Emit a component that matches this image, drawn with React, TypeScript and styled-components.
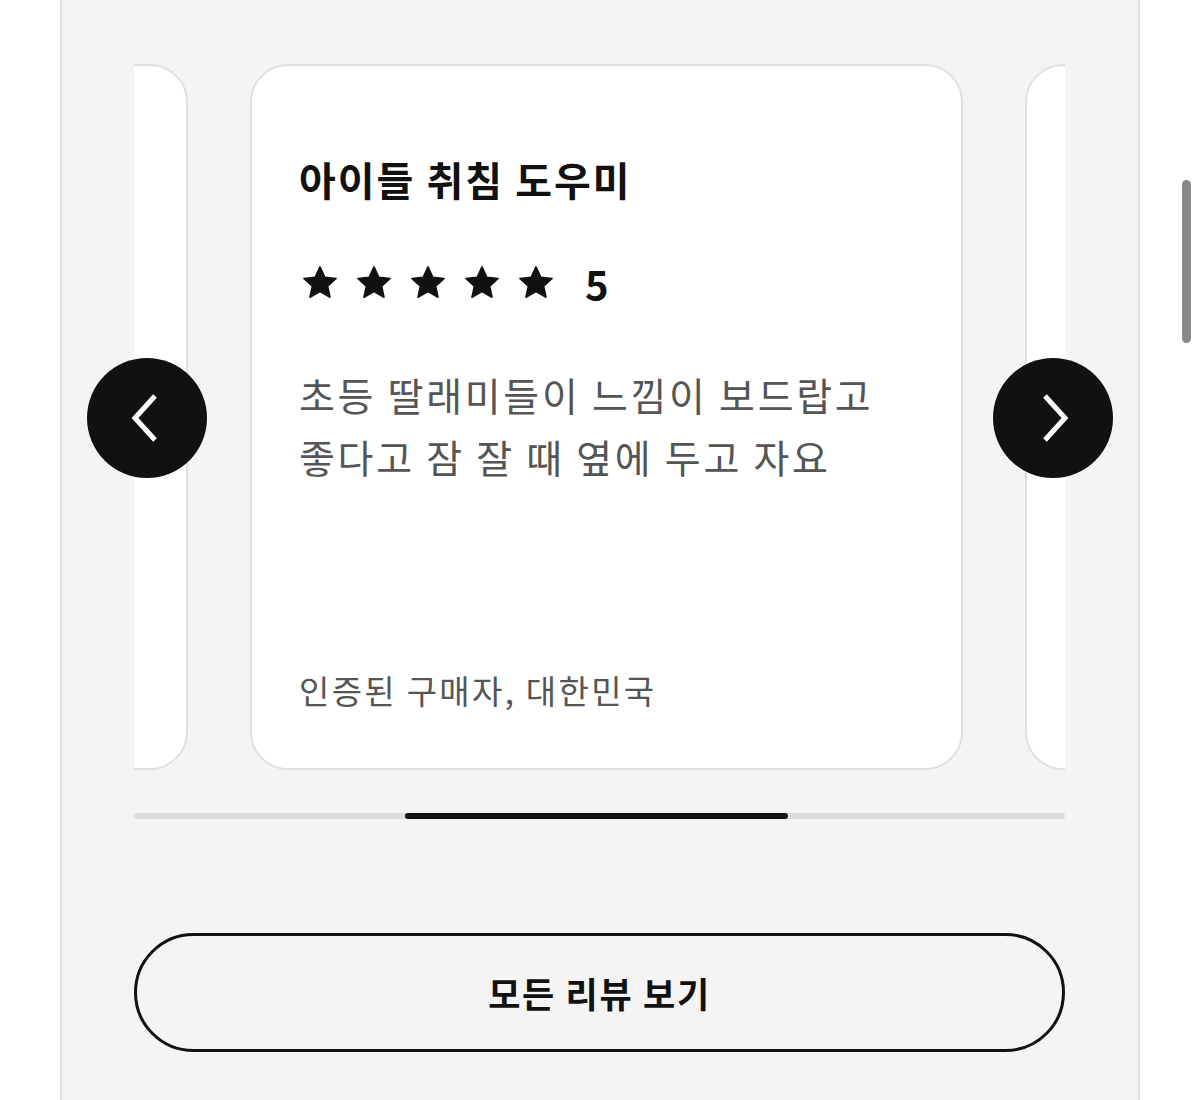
import * as React from 'react';
import styled, { createGlobalStyle } from 'styled-components';

interface Review {
    id: number;
    title: string;
    rating: number;
    body: string;
    author: string;
}

const reviews: Review[] = [
    { id: 1, title: '포근한 촉감', rating: 5, body: '아이가 정말 좋아해요', author: '인증된 구매자, 대한민국' },
    { id: 2, title: '아이들 취침 도우미', rating: 5, body: '초등 딸래미들이 느낌이 보드랍고 좋다고 잠 잘 때 옆에 두고 자요', author: '인증된 구매자, 대한민국' },
    { id: 3, title: '선물용으로 최고', rating: 5, body: '조카 선물로 샀는데 반응이 좋아요', author: '인증된 구매자, 대한민국' },
];

const CARD_WIDTH = 713;
const CARD_GAP = 62;
const activeIndex = 1;
const trackOffset = 116 - activeIndex * (CARD_WIDTH + CARD_GAP);

const Star = () => (
    <svg width="38" height="36" viewBox="0 0 24 23">
        <path
            d="M12 1.2l3.1 6.6 7.2.8-5.4 4.9 1.5 7.1L12 17l-6.4 3.6 1.5-7.1L1.7 8.6l7.2-.8z"
            fill="#111"
            stroke="#111"
            strokeWidth="1"
            strokeLinejoin="round"
        />
    </svg>
);

const Chevron = ({ dir }: { dir: 'left' | 'right' }) => (
    <svg width="40" height="52" viewBox="0 0 40 52">
        <path
            d={dir === 'left' ? 'M28 4L8 26l20 22' : 'M12 4l20 22-20 22'}
            fill="none"
            stroke="#fff"
            strokeWidth="5"
        />
    </svg>
);

const App: React.FC = () => {
    return (
        <>
            <GlobalStyle />
            <Page>
                <Panel>
                    <Carousel>
                        <Viewport>
                            <Track style={{ transform: `translateX(${trackOffset}px)` }}>
                                {reviews.map(review => (
                                    <Card key={review.id}>
                                        <Title>{review.title}</Title>
                                        <Rating>
                                            <Stars>
                                                {Array.from({ length: review.rating }).map((_, i) => (
                                                    <Star key={i} />
                                                ))}
                                            </Stars>
                                            <Score>{review.rating}</Score>
                                        </Rating>
                                        <Body>{review.body}</Body>
                                        <Author>{review.author}</Author>
                                    </Card>
                                ))}
                            </Track>
                        </Viewport>
                        <NavButton side="left" aria-label="이전">
                            <Chevron dir="left" />
                        </NavButton>
                        <NavButton side="right" aria-label="다음">
                            <Chevron dir="right" />
                        </NavButton>
                    </Carousel>

                    <Progress>
                        <ProgressThumb />
                    </Progress>

                    <AllButton>모든 리뷰 보기</AllButton>
                </Panel>
                <ScrollIndicator />
            </Page>
        </>
    );
};

const GlobalStyle = createGlobalStyle`
    html, body {
        margin: 0;
        padding: 0;
        background: #fff;
    }

    body {
        font-family: "Noto Sans CJK KR", "Noto Sans", sans-serif;
        color: #111;
    }
`;

const Page = styled.div`
    position: relative;
    height: 1100px;
    overflow: hidden;
    background: #fff;
`;

const Panel = styled.div`
    box-sizing: border-box;
    width: 1080px;
    height: 1100px;
    margin-left: 60px;
    padding: 64px 73px 0 72px;
    background: #f4f4f4;
    border-left: 2px solid #e2e2e2;
    border-right: 2px solid #e2e2e2;
`;

const Carousel = styled.div`
    position: relative;
`;

const Viewport = styled.div`
    overflow: hidden;
`;

const Track = styled.div`
    display: flex;
    gap: ${CARD_GAP}px;
`;

const Card = styled.div`
    box-sizing: border-box;
    flex: 0 0 ${CARD_WIDTH}px;
    height: 706px;
    display: flex;
    flex-direction: column;
    padding: 83px 50px 54px 47px;
    background: #fff;
    border: 2px solid #e0e0e0;
    border-radius: 38px;
`;

const Title = styled.h3`
    margin: 0;
    font-size: 40px;
    font-weight: 700;
    line-height: 60px;
    letter-spacing: 2px;
    color: #111;
`;

const Rating = styled.div`
    display: flex;
    align-items: center;
    gap: 30px;
    margin-top: 54px;
    padding-left: 2px;
`;

const Stars = styled.div`
    display: flex;
    gap: 16px;
`;

const Score = styled.span`
    font-size: 40px;
    font-weight: 700;
    line-height: 1;
`;

const Body = styled.p`
    margin: 60px 0 0;
    font-size: 39px;
    line-height: 62px;
    letter-spacing: 2.7px;
    color: #555;
    word-break: keep-all;
`;

const Author = styled.div`
    margin-top: auto;
    font-size: 33px;
    line-height: 48px;
    letter-spacing: 2.3px;
    color: #555;
`;

const NavButton = styled.button<{ side: 'left' | 'right' }>`
    position: absolute;
    top: 294px;
    ${p => (p.side === 'left' ? 'left: -47px;' : 'right: -48px;')}
    width: 120px;
    height: 120px;
    display: flex;
    align-items: center;
    justify-content: center;
    padding: 0;
    border: none;
    border-radius: 50%;
    background: #111;
    cursor: pointer;
`;

const Progress = styled.div`
    position: relative;
    height: 6px;
    margin-top: 43px;
    border-radius: 3px;
    background: #dcdcdc;
`;

const ProgressThumb = styled.div`
    position: absolute;
    top: 0;
    left: 271px;
    width: 383px;
    height: 6px;
    border-radius: 3px;
    background: #111;
`;

const AllButton = styled.button`
    box-sizing: border-box;
    display: block;
    width: 100%;
    height: 119px;
    margin-top: 114px;
    border: 3px solid #111;
    border-radius: 60px;
    background: transparent;
    font-family: "Noto Sans CJK KR", "Noto Sans", sans-serif;
    font-size: 35px;
    font-weight: 700;
    letter-spacing: 1.7px;
    color: #111;
    cursor: pointer;
`;

const ScrollIndicator = styled.div`
    position: absolute;
    top: 180px;
    left: 1182px;
    width: 9px;
    height: 163px;
    border-radius: 5px;
    background: #888;
`;

export default App;
